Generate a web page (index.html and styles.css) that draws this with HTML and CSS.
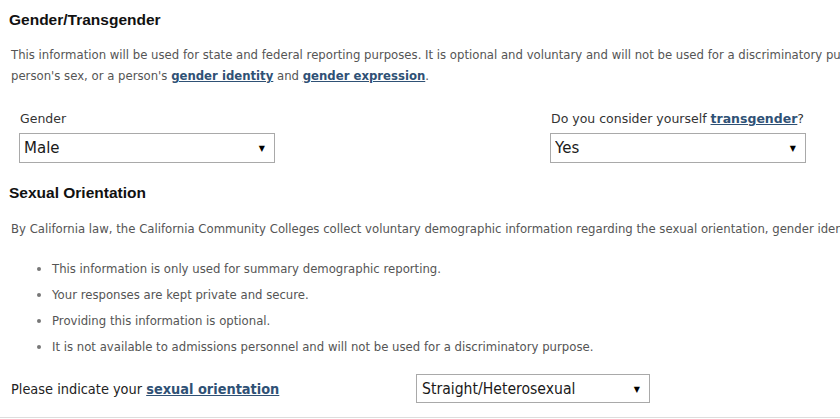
FILE: index.html
```html
<!DOCTYPE html>
<html lang="en">
<head>
  <meta charset="UTF-8">
  <meta name="viewport" content="width=device-width, initial-scale=1">
  <title>Demographic Information</title>
  <link rel="stylesheet" href="styles.css">
</head>
<body>
  <div class="page">
    <h3>Gender/Transgender</h3>
    <p class="info">
      <span class="line">This information will be used for state and federal reporting purposes. It is optional and voluntary and will not be used for a discriminatory purpose based on a</span>
      <span class="line">person's sex, or a person's <a href="#">gender identity</a> and <a href="#">gender expression</a>.</span>
    </p>

    <div class="gender-row">
      <div class="field">
        <label for="gender">Gender</label>
        <div class="select-wrap">
          <select id="gender">
            <option>Male</option>
            <option>Female</option>
          </select>
        </div>
      </div>
      <div class="field">
        <label for="trans">Do you consider yourself <a href="#">transgender</a>?</label>
        <div class="select-wrap">
          <select id="trans">
            <option>Yes</option>
            <option>No</option>
          </select>
        </div>
      </div>
    </div>

    <h3>Sexual Orientation</h3>
    <p class="info single">
      <span class="line">By California law, the California Community Colleges collect voluntary demographic information regarding the sexual orientation, gender identity and gender expression of students.</span>
    </p>
    <ul class="notes">
      <li>This information is only used for summary demographic reporting.</li>
      <li>Your responses are kept private and secure.</li>
      <li>Providing this information is optional.</li>
      <li>It is not available to admissions personnel and will not be used for a discriminatory purpose.</li>
    </ul>

    <div class="orientation-row">
      <label for="orientation">Please indicate your <a href="#">sexual orientation</a></label>
      <div class="select-wrap narrow">
        <select id="orientation">
          <option>Straight/Heterosexual</option>
          <option>Gay</option>
          <option>Lesbian</option>
          <option>Bisexual</option>
        </select>
      </div>
    </div>
  </div>
</body>
</html>
```

FILE: styles.css
```css
* { box-sizing: border-box; }
body {
  margin: 0;
  background: #ffffff;
  color: #555555;
  font-family: "DejaVu Sans", Verdana, sans-serif;
  font-size: 11.7px;
  overflow: hidden;
}
.page {
  padding: 10px 0 0 9px;
  overflow: hidden;
}
h3 {
  margin: 0;
  color: #111111;
  font-family: "Liberation Sans", Arial, sans-serif;
  font-size: 15.5px;
  font-weight: bold;
  line-height: 20px;
}
a {
  color: #2f5175;
  font-weight: bold;
  text-decoration: underline;
}
.info {
  margin: 15px 0 0 2px;
  line-height: 21px;
}
.info .line {
  display: block;
  white-space: nowrap;
}
.info.single {
  margin-top: 16px;
}
.gender-row {
  display: grid;
  grid-template-columns: 531px 256px;
  margin: 23px 0 20px 10px;
}
.field label {
  display: block;
  margin-left: 1px;
  color: #333333;
  font-size: 12.5px;
  line-height: 18px;
}
.field .select-wrap {
  margin-top: 5px;
}
.select-wrap {
  position: relative;
  width: 256px;
}
.select-wrap::after {
  content: "\25BC";
  position: absolute;
  right: 10px;
  top: 50%;
  transform: translateY(-50%);
  color: #000000;
  font-size: 8px;
  pointer-events: none;
}
select {
  display: block;
  width: 100%;
  height: 30px;
  margin: 0;
  padding: 0 20px 0 4px;
  border: 1px solid #a9a9a9;
  border-radius: 0;
  background: #ffffff;
  color: #1a1a1a;
  font-family: "DejaVu Sans", Verdana, sans-serif;
  font-size: 15px;
  appearance: none;
  -webkit-appearance: none;
}
.notes {
  margin: 16px 0 0 0;
  padding-left: 43px;
  line-height: 26px;
}
.notes li::marker {
  color: #777777;
  font-size: 13px;
}
.orientation-row {
  display: grid;
  grid-template-columns: 405px 234px;
  align-items: center;
  margin: 14px 0 0 -9px;
  padding: 0 0 14px 11px;
  border-bottom: 1px solid #dddddd;
}
.orientation-row label {
  color: #222222;
  font-family: "DejaVu Sans Condensed", "DejaVu Sans", sans-serif;
  font-size: 14.4px;
}
.select-wrap.narrow {
  width: 234px;
}
.select-wrap.narrow select {
  height: 29px;
  padding-left: 5px;
  font-family: "DejaVu Sans Condensed", "DejaVu Sans", sans-serif;
  font-size: 15.6px;
}
```
